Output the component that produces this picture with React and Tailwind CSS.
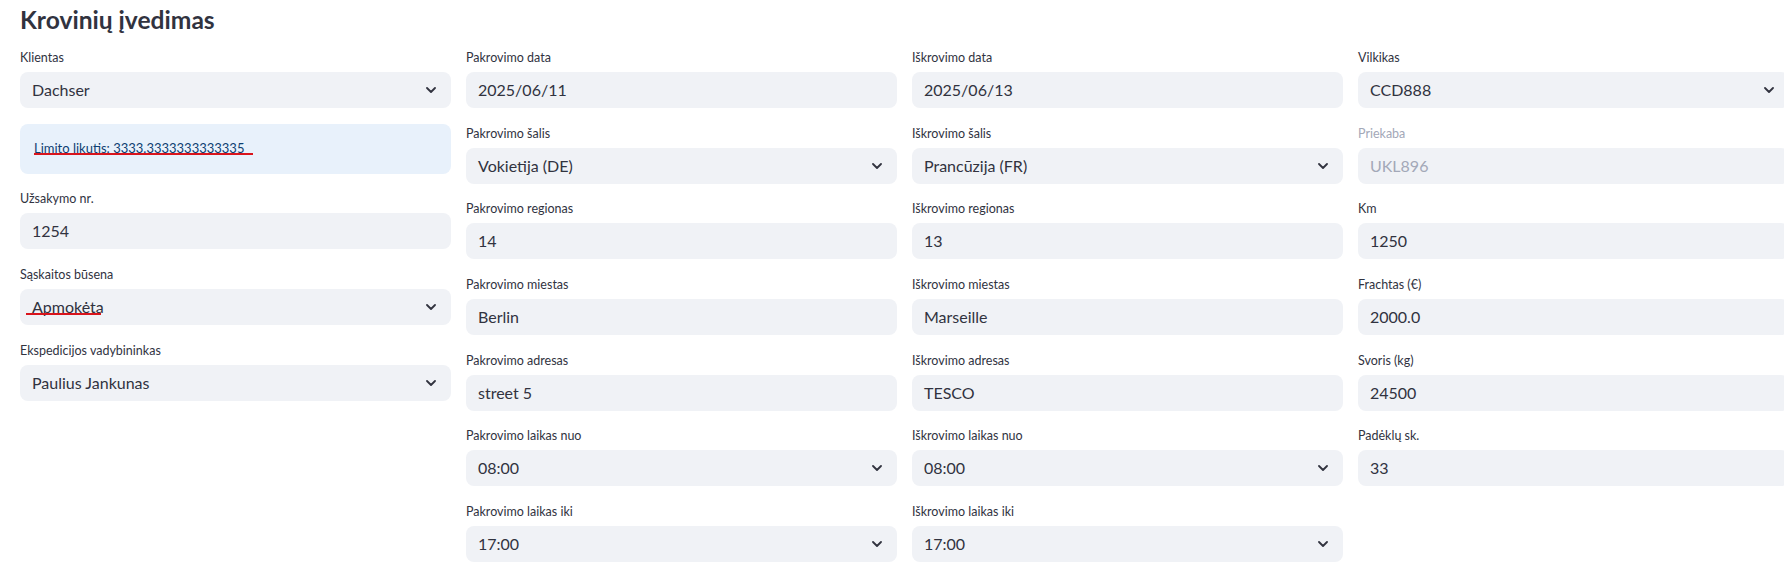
const font = { fontFamily: 'Lato, "Noto Sans", sans-serif' }

function Chevron() {
  return (
    <svg width="10" height="6" viewBox="0 0 10 6" className="shrink-0 text-[#31333f]">
      <polyline points="1,1 5,5 9,1" fill="none" stroke="currentColor" strokeWidth="1.8" strokeLinecap="round" strokeLinejoin="round" />
    </svg>
  )
}

function Field({ label, value, select, disabled, mark }) {
  return (
    <div className="flex flex-col">
      <div className={`h-[24px] text-[12.5px] leading-[20px] ${disabled ? 'text-[#a3a8b8]' : 'text-[#31333f]'}`}>{label}</div>
      <div className={`relative h-[36px] rounded-lg bg-[#f0f2f6] flex items-center justify-between pl-[12px] pr-[15px] text-[16px] ${disabled ? 'text-[#a3a8b8]' : 'text-[#31333f]'}`}>
        <span>{value}</span>
        {select && <Chevron />}
        {mark && <span className="absolute left-[6px] top-[24px] h-[2px] w-[75px] bg-[#d9141c]" />}
      </div>
    </div>
  )
}

const col2 = [
  ['Pakrovimo data', '2025/06/11'],
  ['Pakrovimo šalis', 'Vokietija (DE)', true],
  ['Pakrovimo regionas', '14'],
  ['Pakrovimo miestas', 'Berlin'],
  ['Pakrovimo adresas', 'street 5'],
  ['Pakrovimo laikas nuo', '08:00', true],
  ['Pakrovimo laikas iki', '17:00', true],
]

const col3 = [
  ['Iškrovimo data', '2025/06/13'],
  ['Iškrovimo šalis', 'Prancūzija (FR)', true],
  ['Iškrovimo regionas', '13'],
  ['Iškrovimo miestas', 'Marseille'],
  ['Iškrovimo adresas', 'TESCO'],
  ['Iškrovimo laikas nuo', '08:00', true],
  ['Iškrovimo laikas iki', '17:00', true],
]

const col4 = [
  ['Vilkikas', 'CCD888', true],
  ['Priekaba', 'UKL896', false, true],
  ['Km', '1250'],
  ['Frachtas (€)', '2000.0'],
  ['Svoris (kg)', '24500'],
  ['Padėklų sk.', '33'],
]

export default function App() {
  return (
    <div className="w-[1784px] h-[577px] overflow-hidden bg-white" style={font}>
      <div className="w-[1820px] pl-[20px]">
        <h1 className="h-[48px] pt-[5px] text-[24.6px] leading-[30px] font-bold text-[#31333f]">Krovinių įvedimas</h1>
        <div className="grid grid-cols-[431px_431px_431px_431px] gap-x-[15px]">
          <div className="flex flex-col gap-[15.67px]">
            <Field label="Klientas" value="Dachser" select />
            <div className="relative h-[50px] rounded-lg bg-[#e8f1fb] flex items-center px-[14px] text-[13px] text-[#0e3f72]">
              <span className="underline">Limito likutis: 3333.3333333333335</span>
              <span className="absolute left-[14px] top-[29px] h-[2px] w-[219px] bg-[#d9141c]" />
            </div>
            <Field label="Užsakymo nr." value="1254" />
            <Field label="Sąskaitos būsena" value="Apmokėta" select mark />
            <Field label="Ekspedicijos vadybininkas" value="Paulius Jankunas" select />
          </div>
          <div className="flex flex-col gap-[15.67px]">
            {col2.map(([l, v, s]) => <Field key={l} label={l} value={v} select={s} />)}
          </div>
          <div className="flex flex-col gap-[15.67px]">
            {col3.map(([l, v, s]) => <Field key={l} label={l} value={v} select={s} />)}
          </div>
          <div className="flex flex-col gap-[15.67px]">
            {col4.map(([l, v, s, d]) => <Field key={l} label={l} value={v} select={s} disabled={d} />)}
          </div>
        </div>
      </div>
    </div>
  )
}
